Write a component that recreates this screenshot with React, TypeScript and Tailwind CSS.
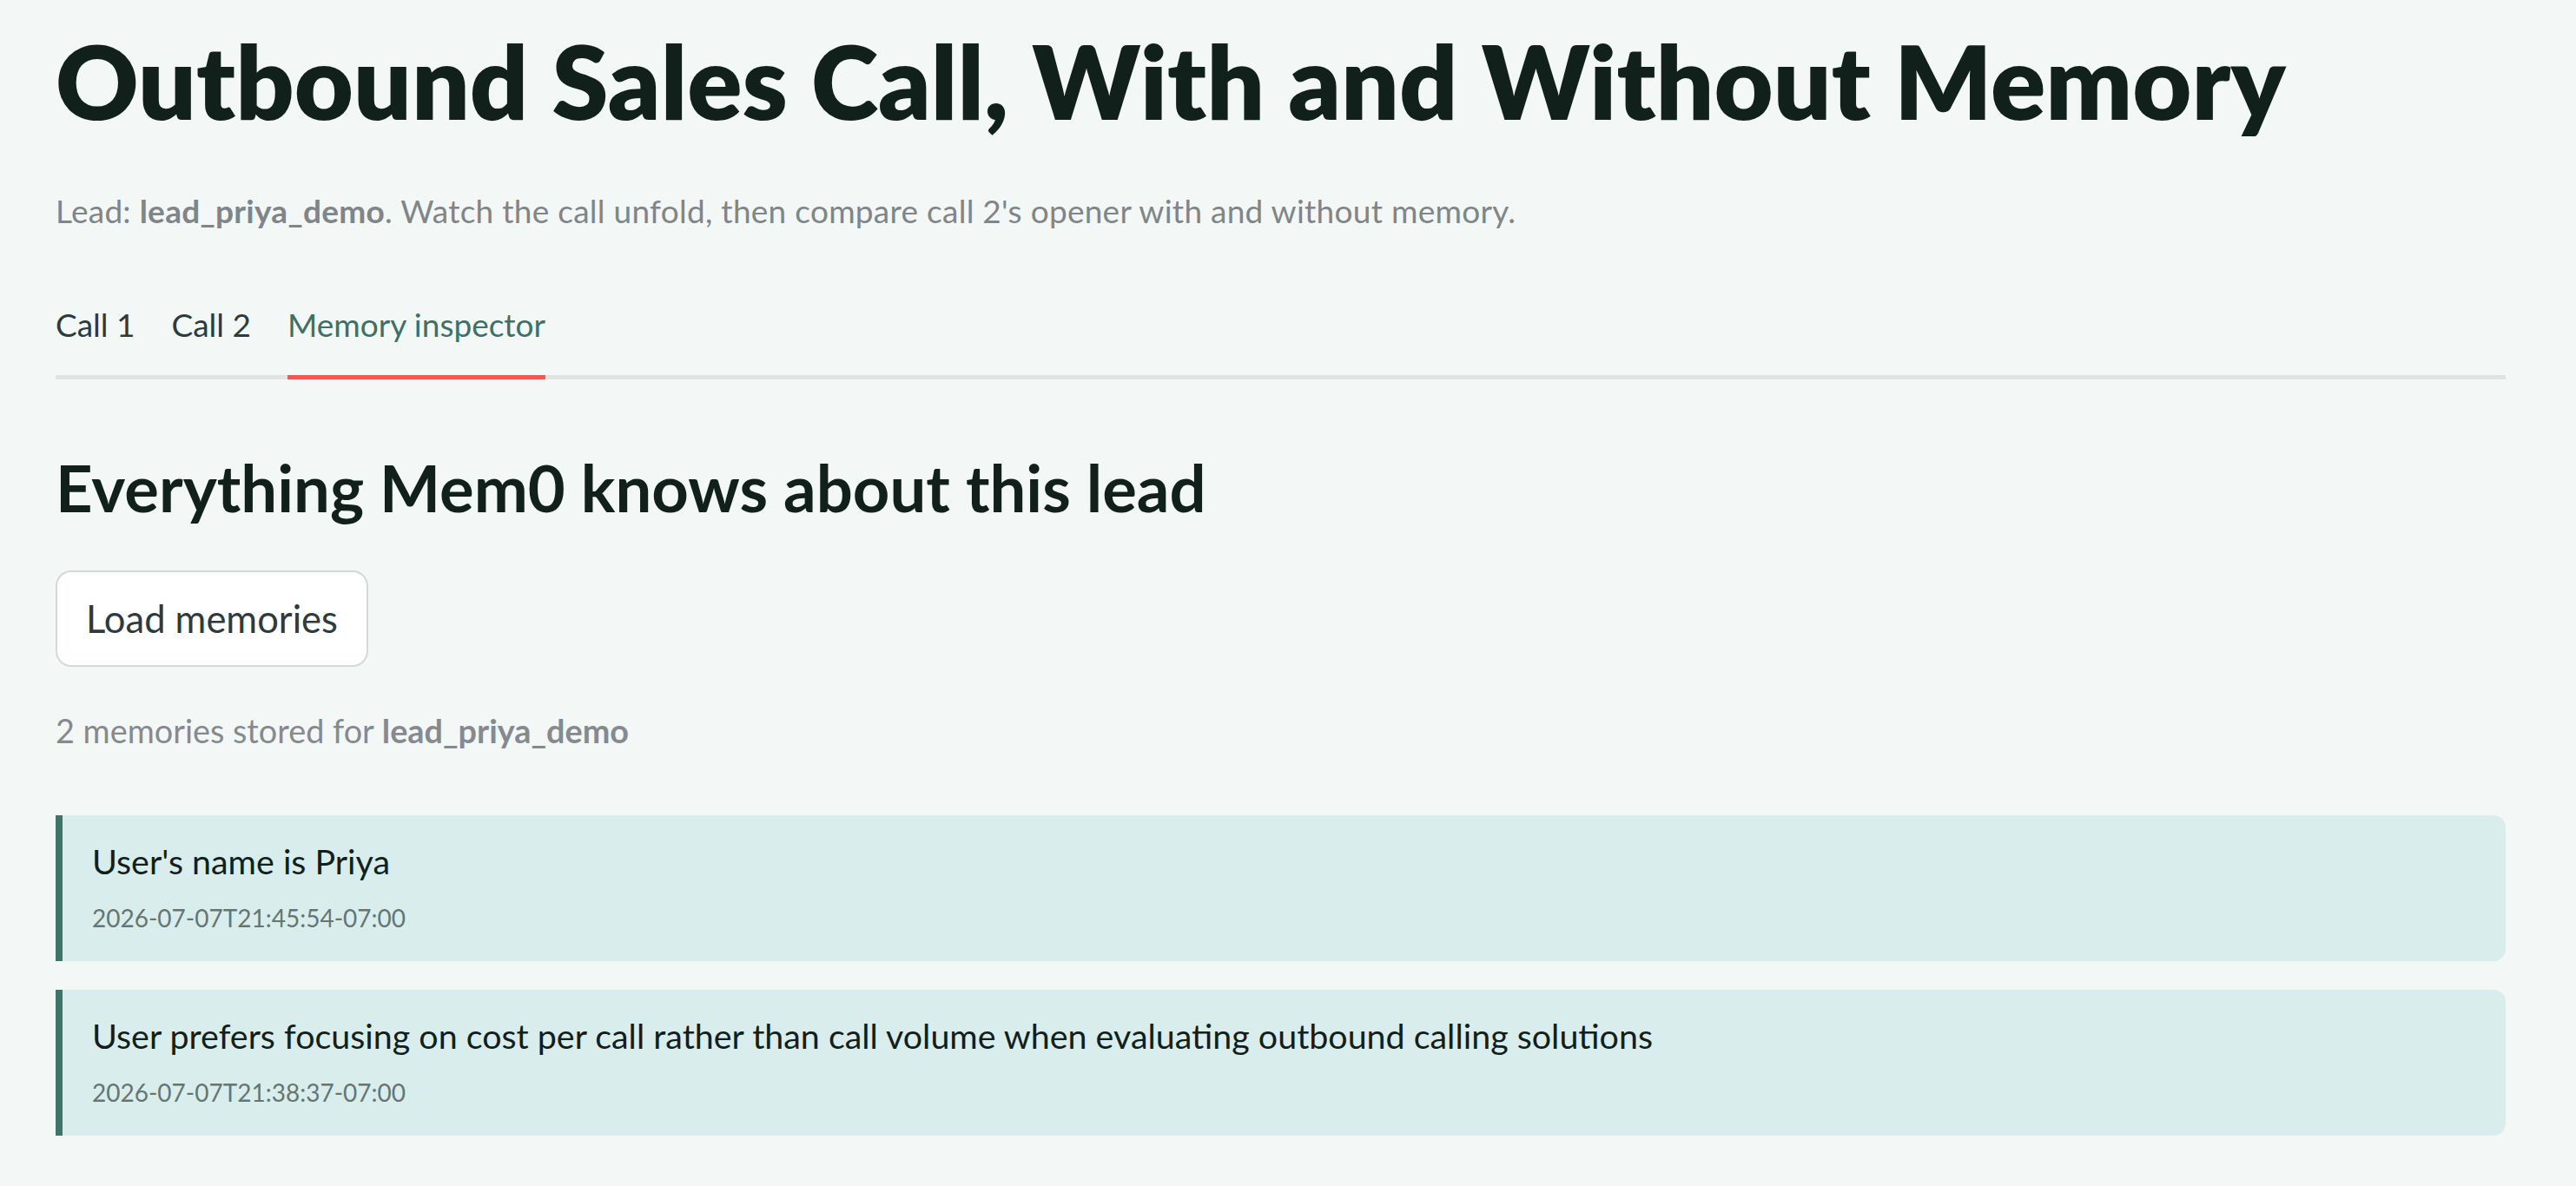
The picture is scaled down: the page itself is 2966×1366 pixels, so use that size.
import React from "react";

const memories = [
  { text: "User's name is Priya", ts: "2026-07-07T21:45:54-07:00" },
  {
    text: "User prefers focusing on cost per call rather than call volume when evaluating outbound calling solutions",
    ts: "2026-07-07T21:38:37-07:00",
  },
];

export default function App() {
  return (
    <div className="min-h-screen bg-[#f3f7f6] font-['Lato',sans-serif] pl-[64px] pr-[81px] pt-[23px] pb-[40px]">
      <h1 className="text-[117.5px] leading-[139px] font-extrabold text-[#12201c]">
        Outbound Sales Call, With and Without Memory
      </h1>
      <p className="mt-[60px] text-[37px] leading-[42px] tracking-[0.27px] text-[#808589]">
        Lead: <span className="font-bold">lead_priya_demo</span>. Watch the call unfold, then compare call 2's opener with and without memory.
      </p>

      <div className="mt-[87px] flex gap-[42px] border-b-[5px] border-[#dfe3e1]">
        <div className="text-[37px] leading-[45px] text-[#2e3b3c] pb-[36px] -mb-[5px]">Call 1</div>
        <div className="text-[37px] leading-[45px] text-[#2e3b3c] pb-[36px] -mb-[5px]">Call 2</div>
        <div className="text-[37px] leading-[45px] text-[#3b7167] pb-[36px] -mb-[5px] border-b-[5px] border-[#ef5b52]">
          Memory inspector
        </div>
      </div>

      <h3 className="mt-[82px] text-[74.2px] leading-[86px] font-bold text-[#12201c]">
        Everything Mem0 knows about this lead
      </h3>

      <button className="mt-[52px] h-[111px] w-[360px] rounded-[18px] border-2 border-[#d3d9d7] bg-white text-[43.5px] text-[#2e3a3c] flex items-center justify-center">
        Load memories
      </button>

      <p className="mt-[52px] text-[37.8px] leading-[43px] text-[#868a8f]">
        2 memories stored for <span className="font-bold">lead_priya_demo</span>
      </p>

      <div className="mt-[76px] flex flex-col gap-[33px]">
        {memories.map((m) => (
          <div
            key={m.ts}
            className="h-[168px] rounded-r-[14px] border-l-[8px] border-[#3f7568] bg-[#d9eded] pl-[34px] pt-[29px]"
          >
            <div className="text-[39.4px] leading-[47px] text-[#12201c]">{m.text}</div>
            <div className="mt-[25px] text-[28px] leading-[35px] text-[#667571]">{m.ts}</div>
          </div>
        ))}
      </div>
    </div>
  );
}
